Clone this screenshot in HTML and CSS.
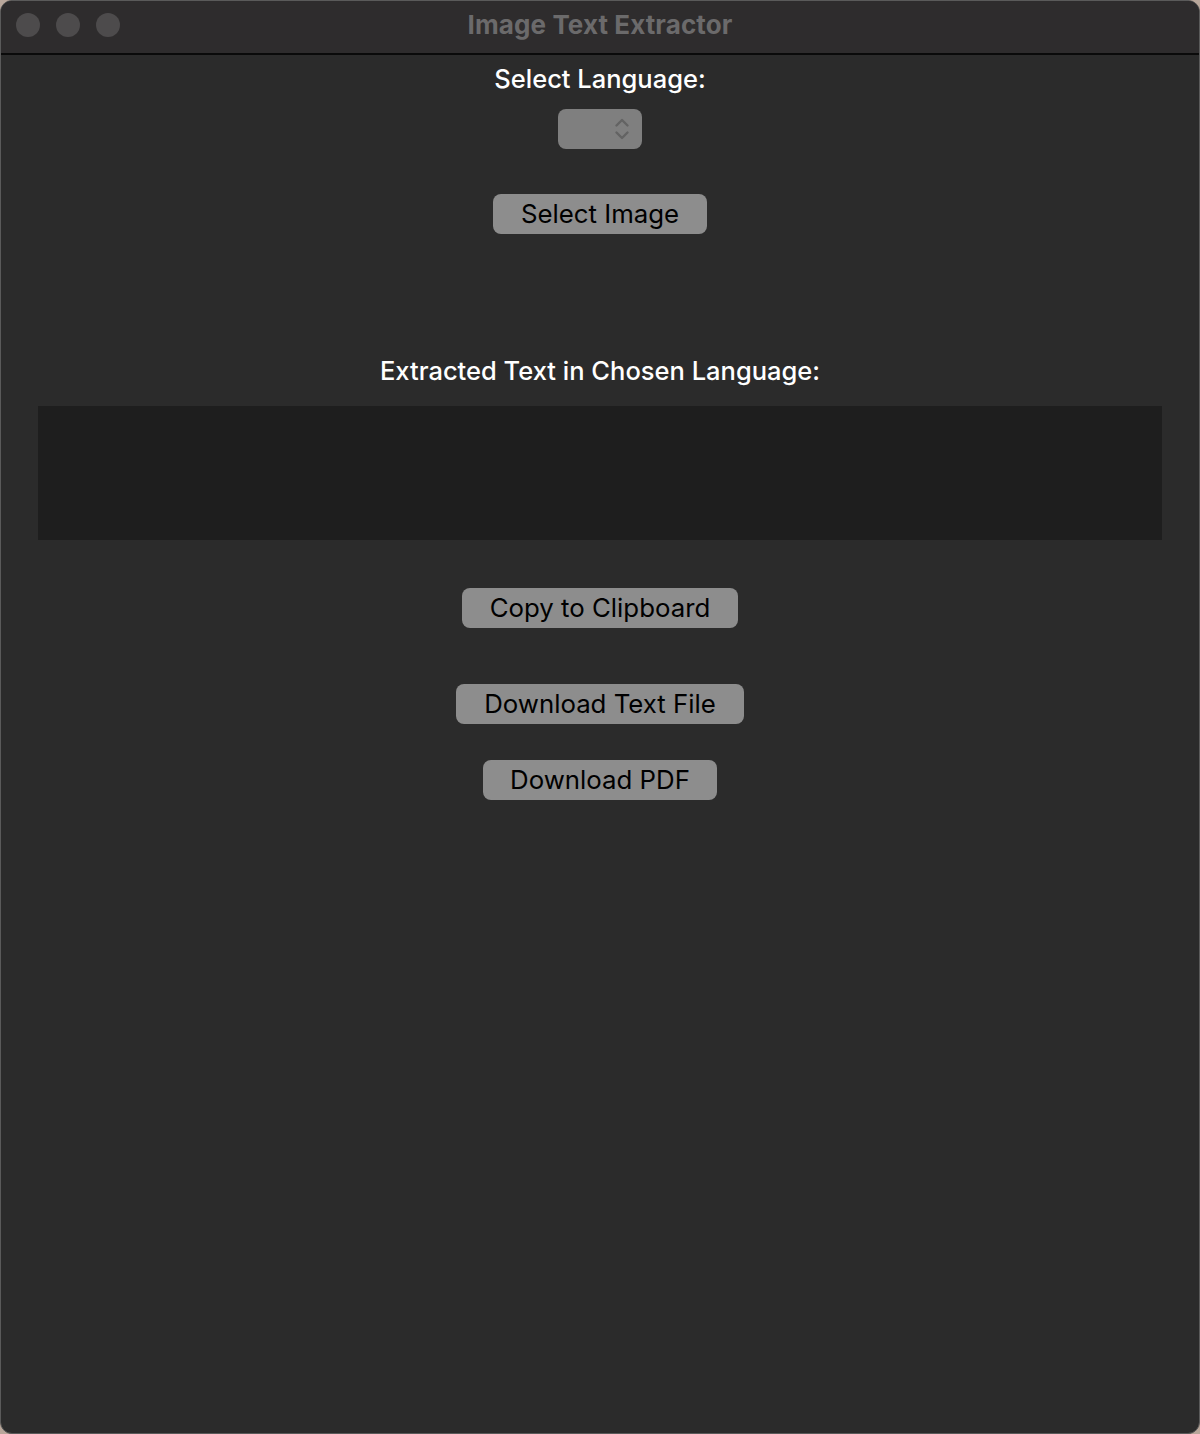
FILE: index.html
```html
<!DOCTYPE html>
<html>
<head>
<meta charset="utf-8">
<link rel="stylesheet" href="styles.css">
</head>
<body>
<div class="window">
  <div class="titlebar">
    <div class="lights">
      <span class="light"></span><span class="light"></span><span class="light"></span>
    </div>
    <div class="title">Image Text Extractor</div>
  </div>
  <div class="content">
    <div class="label label-lang">Select Language:</div>
    <div class="popup">
      <svg class="chev" width="16" height="26" viewBox="0 0 16 26">
        <path d="M2.5 9.5 L8 4 L13.5 9.5" fill="none" stroke="#636363" stroke-width="2.4" stroke-linecap="round" stroke-linejoin="round"/>
        <path d="M2.5 16.5 L8 22 L13.5 16.5" fill="none" stroke="#636363" stroke-width="2.4" stroke-linecap="round" stroke-linejoin="round"/>
      </svg>
    </div>
    <div class="btn btn-select">Select Image</div>
    <div class="label label-extracted">Extracted Text in Chosen Language:</div>
    <div class="textarea"></div>
    <div class="btn btn-copy">Copy to Clipboard</div>
    <div class="btn btn-txt">Download Text File</div>
    <div class="btn btn-pdf">Download PDF</div>
  </div>
</div>
</body>
</html>
```

FILE: styles.css
```css
html, body {
  margin: 0;
  padding: 0;
  background: #b9a79b;
}
.window {
  width: 1200px;
  height: 1434px;
  box-sizing: border-box;
  background: #2b2b2b;
  border-radius: 12px;
  border: 1px solid #5a5a5a;
  overflow: hidden;
  display: flex;
  flex-direction: column;
  font-family: "Inter", "Liberation Sans", sans-serif;
}
.titlebar {
  height: 52px;
  border-bottom: 2px solid #0a0a0a;
  background: #2e2c2d;
  position: relative;
  display: flex;
  align-items: center;
  justify-content: center;
}
.lights {
  position: absolute;
  left: 15px;
  top: 12px;
  display: flex;
  gap: 16px;
}
.light {
  width: 24px;
  height: 24px;
  border-radius: 50%;
  background: #4d4b4c;
}
.title {
  color: #6b6a6b;
  font-weight: 700;
  font-size: 26px;
  line-height: 30px;
  margin-top: -4px;
  letter-spacing: 0.1px;
}
.content {
  display: flex;
  flex-direction: column;
  align-items: center;
}
.label {
  color: #ffffff;
  font-size: 25.5px;
  line-height: 30px;
  font-weight: 500;
}
.label-lang {
  margin-top: 9px;
}
.popup {
  margin-top: 15px;
  width: 84px;
  height: 40px;
  border-radius: 8px;
  background: #7f7f7f;
  display: flex;
  align-items: center;
  justify-content: flex-end;
  box-sizing: border-box;
  padding-right: 12px;
}
.btn {
  height: 40px;
  box-sizing: border-box;
  border-radius: 8px;
  background: #8d8d8d;
  color: #000;
  font-size: 25.8px;
  line-height: 40px;
  text-align: center;
}
.btn-select {
  margin-top: 45px;
  width: 214px;
}
.label-extracted {
  margin-top: 122px;
}
.textarea {
  margin-top: 20px;
  width: 1124px;
  height: 134px;
  background: #1e1e1e;
}
.btn-copy {
  margin-top: 48px;
  width: 276px;
}
.btn-txt {
  margin-top: 56px;
  width: 288px;
}
.btn-pdf {
  margin-top: 36px;
  width: 234px;
}
```
